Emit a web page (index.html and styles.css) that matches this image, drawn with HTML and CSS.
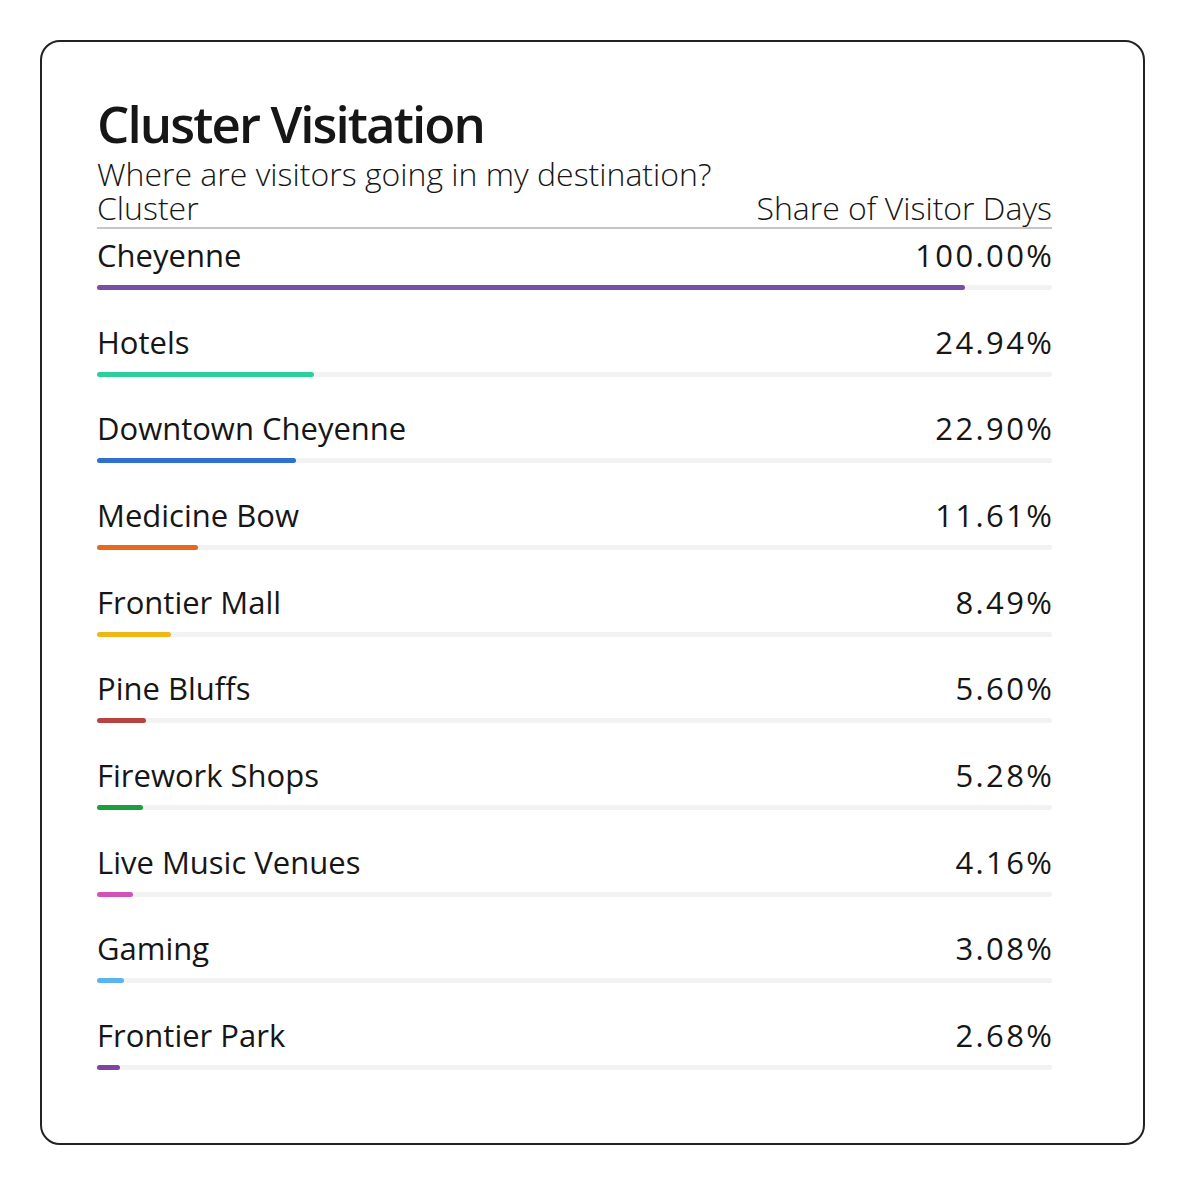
FILE: index.html
```html
<!DOCTYPE html>
<html lang="en">
<head>
<meta charset="utf-8">
<title>Cluster Visitation</title>
<link rel="stylesheet" href="styles.css">
</head>
<body>
<div class="card">
  <h1 class="title">Cluster Visitation</h1>
  <p class="subtitle">Where are visitors going in my destination?</p>
  <div class="head">
    <span>Cluster</span>
    <span>Share of Visitor Days</span>
  </div>
  <div class="rows">
    <div class="row">
      <div class="line"><span>Cheyenne</span><span class="val">100.00%</span></div>
      <div class="track"><div class="bar c1" style="width:868px"></div></div>
    </div>
    <div class="row">
      <div class="line"><span>Hotels</span><span class="val">24.94%</span></div>
      <div class="track"><div class="bar c2" style="width:216.5px"></div></div>
    </div>
    <div class="row">
      <div class="line"><span>Downtown Cheyenne</span><span class="val">22.90%</span></div>
      <div class="track"><div class="bar c3" style="width:198.8px"></div></div>
    </div>
    <div class="row">
      <div class="line"><span>Medicine Bow</span><span class="val">11.61%</span></div>
      <div class="track"><div class="bar c4" style="width:100.8px"></div></div>
    </div>
    <div class="row">
      <div class="line"><span>Frontier Mall</span><span class="val">8.49%</span></div>
      <div class="track"><div class="bar c5" style="width:73.7px"></div></div>
    </div>
    <div class="row">
      <div class="line"><span>Pine Bluffs</span><span class="val">5.60%</span></div>
      <div class="track"><div class="bar c6" style="width:48.6px"></div></div>
    </div>
    <div class="row">
      <div class="line"><span>Firework Shops</span><span class="val">5.28%</span></div>
      <div class="track"><div class="bar c7" style="width:45.8px"></div></div>
    </div>
    <div class="row">
      <div class="line"><span>Live Music Venues</span><span class="val">4.16%</span></div>
      <div class="track"><div class="bar c8" style="width:36.1px"></div></div>
    </div>
    <div class="row">
      <div class="line"><span>Gaming</span><span class="val">3.08%</span></div>
      <div class="track"><div class="bar c9" style="width:26.7px"></div></div>
    </div>
    <div class="row">
      <div class="line"><span>Frontier Park</span><span class="val">2.68%</span></div>
      <div class="track"><div class="bar c10" style="width:23.3px"></div></div>
    </div>
  </div>
</div>
</body>
</html>
```

FILE: styles.css
```css
* { box-sizing: border-box; }
html, body { margin: 0; padding: 0; background: #fff; }
body {
  font-family: "Open Sans", "Noto Sans", sans-serif;
  color: #161616;
}
.card {
  margin: 40px 0 0 40px;
  width: 1105px;
  height: 1105px;
  border: 2px solid #222226;
  border-radius: 20px;
  padding: 54px 0 0 55px;
}
.title {
  margin: 0;
  font-size: 51px;
  line-height: 54px;
  font-weight: 600;
  letter-spacing: -1.9px;
  width: 955px;
}
.subtitle {
  margin: 7px 0 0;
  font-size: 32px;
  line-height: 34px;
  font-weight: 300;
}
.head {
  width: 955px;
  display: flex;
  justify-content: space-between;
  font-size: 32px;
  line-height: 34px;
  font-weight: 300;
  padding-bottom: 2px;
  border-bottom: 2px solid #c6c6c6;
}
.rows {
  width: 955px;
  margin-top: 8px;
  display: flex;
  flex-direction: column;
}
.row {
  height: 86.67px;
}
.line {
  display: flex;
  justify-content: space-between;
  font-size: 31px;
  line-height: 36px;
  font-weight: 400;
}
.val {
  letter-spacing: 2.4px;
  margin-right: -2.4px;
}
.track {
  margin-top: 12px;
  height: 5px;
  background: #f2f2f2;
  border-radius: 3px;
}
.bar {
  height: 5px;
  border-radius: 3px;
}
.c1 { background: #7a4fa3; }
.c2 { background: #2bcf99; }
.c3 { background: #2f6fd0; }
.c4 { background: #e8691c; }
.c5 { background: #f0b616; }
.c6 { background: #b94341; }
.c7 { background: #1a9f3f; }
.c8 { background: #d352b9; }
.c9 { background: #5ab4f0; }
.c10 { background: #7e45a6; }
```
